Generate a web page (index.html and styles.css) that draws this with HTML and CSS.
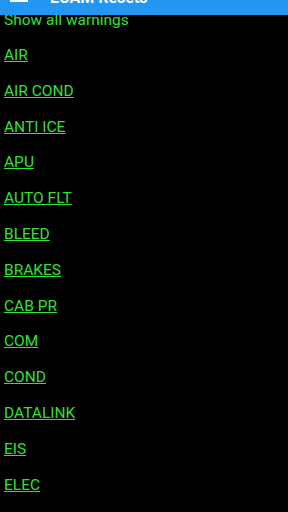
FILE: index.html
```html
<!DOCTYPE html>
<html lang="en">
<head>
    <meta charset="UTF-8">
    <meta name="viewport" content="width=device-width, initial-scale=1.0">
    <title>ECAM Resets</title>
    <link rel="stylesheet" href="styles.css">
</head>
<body>
    <div class="toolbar">
        <div class="toolbar-inner">
            <svg class="menu-icon" width="18" height="14" viewBox="0 0 18 14">
                <rect x="0" y="0" width="18" height="2" fill="#fff"/>
                <rect x="0" y="6" width="18" height="2" fill="#fff"/>
                <rect x="0" y="12" width="18" height="2" fill="#fff"/>
            </svg>
            <span class="title">ECAM Resets</span>
        </div>
    </div>

    <div class="content">
        <div class="show-all">Show all warnings</div>
        <ul class="systems">
            <li><a href="#">AIR</a></li>
            <li><a href="#">AIR COND</a></li>
            <li><a href="#">ANTI ICE</a></li>
            <li><a href="#">APU</a></li>
            <li><a href="#">AUTO FLT</a></li>
            <li><a href="#">BLEED</a></li>
            <li><a href="#">BRAKES</a></li>
            <li><a href="#">CAB PR</a></li>
            <li><a href="#">COM</a></li>
            <li><a href="#">COND</a></li>
            <li><a href="#">DATALINK</a></li>
            <li><a href="#">EIS</a></li>
            <li><a href="#">ELEC</a></li>
        </ul>
    </div>
</body>
</html>
```

FILE: styles.css
```css
html, body {
    margin: 0;
    padding: 0;
    height: 100%;
    overflow: hidden;
    background-color: black;
    font-family: Roboto, "Liberation Sans", sans-serif;
}
.toolbar {
    position: absolute;
    top: 0;
    left: 0;
    right: 0;
    height: 15px;
    overflow: hidden;
    background-color: #2196f3;
    z-index: 2;
}
.toolbar-inner {
    display: flex;
    align-items: flex-end;
    height: 20px;
    margin-top: -12px;
}
.menu-icon {
    margin-left: 10px;
    margin-bottom: 6px;
    flex-shrink: 0;
}
.title {
    margin-left: 22px;
    color: white;
    font-size: 16px;
    font-weight: 700;
    line-height: 20px;
}
.content {
    padding-top: 2px;
    padding-left: 4px;
    color: #33e033;
    font-size: 15.5px;
}
.show-all {
    height: 36px;
    line-height: 36px;
}
.systems {
    list-style: none;
    margin: 0;
    padding: 0;
}
.systems li {
    height: 35.8px;
    line-height: 35.8px;
}
.systems a {
    color: #33e033;
    text-decoration: underline;
}
```
